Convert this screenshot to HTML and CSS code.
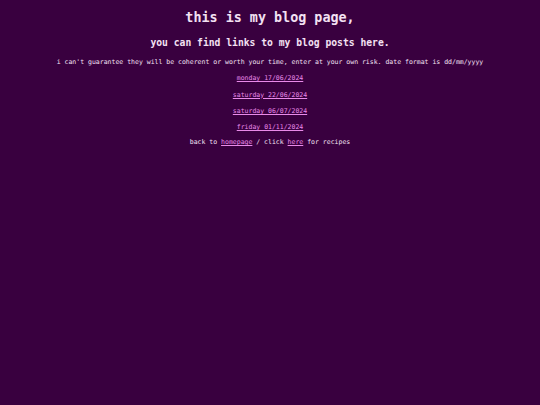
FILE: index.html
```html
<!DOCTYPE html>
<html>
<head>
<meta charset="utf-8">
<link rel="stylesheet" href="styles.css">
</head>
<body>
<main class="page">
  <h1 class="title">this is my blog page,</h1>
  <h2 class="subtitle">you can find links to my blog posts here.</h2>
  <p class="line">i can't guarantee they will be coherent or worth your time, enter at your own risk. date format is dd/mm/yyyy</p>
  <p class="line"><a href="#">monday 17/06/2024</a></p>
  <p class="line"><a href="#">saturday 22/06/2024</a></p>
  <p class="line"><a href="#">saturday 06/07/2024</a></p>
  <p class="line"><a href="#">friday 01/11/2024</a></p>
  <p class="line last">back to <a href="#">homepage</a> / click <a href="#">here</a> for recipes</p>
</main>
</body>
</html>
```
FILE: styles.css
```css
html, body {
  margin: 0;
  padding: 0;
  background: #39003f;
  height: 100%;
}
.page {
  padding-top: 10px;
  text-align: center;
  color: #f3e1f3;
  font-family: "DejaVu Sans Mono", monospace;
}
.title {
  margin: 0;
  font-size: 13.4px;
  line-height: 16px;
  font-weight: bold;
}
.subtitle {
  margin: 11px 0 0;
  font-size: 9.7px;
  line-height: 12px;
  font-weight: bold;
}
.line {
  margin: 8.3px 0 0;
  font-size: 6.5px;
  line-height: 8px;
}
.line:nth-of-type(1) {
  margin-top: 9px;
}
.line.last {
  margin-top: 7px;
}
.line a {
  color: #e98ae9;
  text-decoration: underline;
}
```
